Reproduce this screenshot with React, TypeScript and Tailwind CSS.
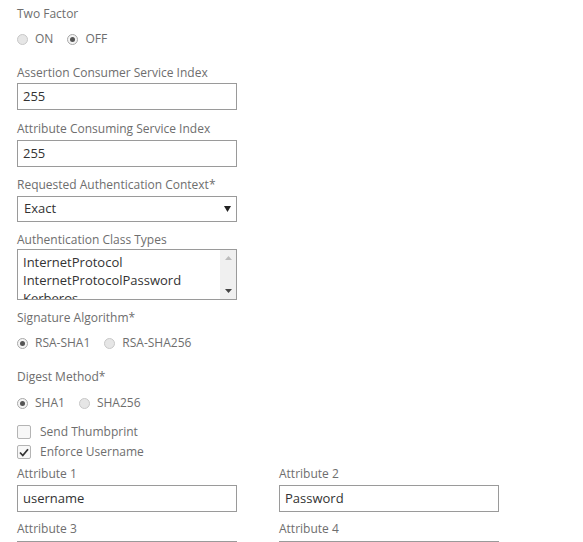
import React from "react";

const font = { fontFamily: '"Open Sans", "Liberation Sans", sans-serif' };

function Label({ children }: { children: React.ReactNode }) {
  return <div className="h-4 text-[12px] leading-4 text-[#6e6e6e]">{children}</div>;
}

function Radio({ checked, label }: { checked?: boolean; label: string }) {
  return (
    <label className="flex items-center gap-[7px] text-[12px] text-[#6e6e6e]">
      <span
        className={
          "flex h-[11px] w-[11px] items-center justify-center rounded-full border " +
          (checked ? "border-[#a8a8a8] bg-[#f4f4f4]" : "border-[#c8c8c8] bg-[#e6e6e6]")
        }
      >
        {checked && <span className="h-[5px] w-[5px] rounded-full bg-[#555]" />}
      </span>
      <span>{label}</span>
    </label>
  );
}

function Check({ checked, label }: { checked?: boolean; label: string }) {
  return (
    <label className="flex h-[20px] items-center gap-[9px] text-[12px] text-[#6e6e6e]">
      <span className="flex h-[14px] w-[14px] items-center justify-center rounded-[2px] border border-[#b4b4b4] bg-[#f7f7f7]">
        {checked && (
          <svg width="10" height="9" viewBox="0 0 10 9">
            <path d="M1 4.5 L3.8 7.5 L9 1.2" fill="none" stroke="#333" strokeWidth="1.8" />
          </svg>
        )}
      </span>
      {label}
    </label>
  );
}

function TextBox({ value }: { value: string }) {
  return (
    <div className="flex h-[27px] w-[220px] items-center border border-[#9a9a9a] bg-white pl-[5px] text-[13px] text-[#333]">
      {value}
    </div>
  );
}

export default function App() {
  return (
    <div className="min-h-[542px] bg-white pl-[17px] pt-[6px]" style={font}>
      <Label>Two Factor</Label>
      <div className="mt-[7px] flex h-5 items-center gap-[14px]">
        <Radio label="ON" />
        <Radio checked label="OFF" />
      </div>

      <div className="mt-[16px]">
        <Label>Assertion Consumer Service Index</Label>
        <div className="mt-[2px]">
          <TextBox value="255" />
        </div>
      </div>

      <div className="mt-[11px]">
        <Label>Attribute Consuming Service Index</Label>
        <div className="mt-[3px]">
          <TextBox value="255" />
        </div>
      </div>

      <div className="mt-[10px]">
        <Label>Requested Authentication Context*</Label>
        <div className="mt-[3px] flex h-[26px] w-[220px] items-center justify-between border border-[#9a9a9a] bg-white pl-[6px] pr-[5px] text-[13px] text-[#333]">
          <span>Exact</span>
          <svg width="7" height="6" viewBox="0 0 7 6">
            <path d="M0 0 H7 L3.5 6 Z" fill="#222" />
          </svg>
        </div>
      </div>

      <div className="mt-[10px]">
        <Label>Authentication Class Types</Label>
        <div className="mt-[1px] flex h-[51px] w-[220px] border border-[#9a9a9a] bg-white">
          <div className="flex-1 overflow-hidden pl-[5px] pt-[3px] text-[13px] leading-[18px] text-[#333]">
            <div>InternetProtocol</div>
            <div>InternetProtocolPassword</div>
            <div>Kerberos</div>
          </div>
          <div className="flex w-[16px] flex-col items-center justify-between bg-[#f0f0f0] py-[6px]">
            <svg width="7" height="4" viewBox="0 0 7 4">
              <path d="M0 4 H7 L3.5 0 Z" fill="#bcbcbc" />
            </svg>
            <svg width="7" height="4" viewBox="0 0 7 4">
              <path d="M0 0 H7 L3.5 4 Z" fill="#444" />
            </svg>
          </div>
        </div>
      </div>

      <div className="mt-[10px]">
        <Label>Signature Algorithm*</Label>
        <div className="mt-[7px] flex h-5 items-center gap-[14px]">
          <Radio checked label="RSA-SHA1" />
          <Radio label="RSA-SHA256" />
        </div>
      </div>

      <div className="mt-[16px]">
        <Label>Digest Method*</Label>
        <div className="mt-[8px] flex h-5 items-center gap-[14px]">
          <Radio checked label="SHA1" />
          <Radio label="SHA256" />
        </div>
      </div>

      <div className="mt-[9px] flex flex-col">
        <Check label="Send Thumbprint" />
        <Check checked label="Enforce Username" />
      </div>

      <div className="mt-[4px] grid w-[482px] grid-cols-2 gap-x-[42px] gap-y-[9px]">
        <div>
          <Label>Attribute 1</Label>
          <div className="mt-[3px]">
            <TextBox value="username" />
          </div>
        </div>
        <div>
          <Label>Attribute 2</Label>
          <div className="mt-[3px]">
            <TextBox value="Password" />
          </div>
        </div>
        <div>
          <Label>Attribute 3</Label>
          <div className="mt-[4px]">
            <TextBox value="" />
          </div>
        </div>
        <div>
          <Label>Attribute 4</Label>
          <div className="mt-[4px]">
            <TextBox value="" />
          </div>
        </div>
      </div>
    </div>
  );
}
